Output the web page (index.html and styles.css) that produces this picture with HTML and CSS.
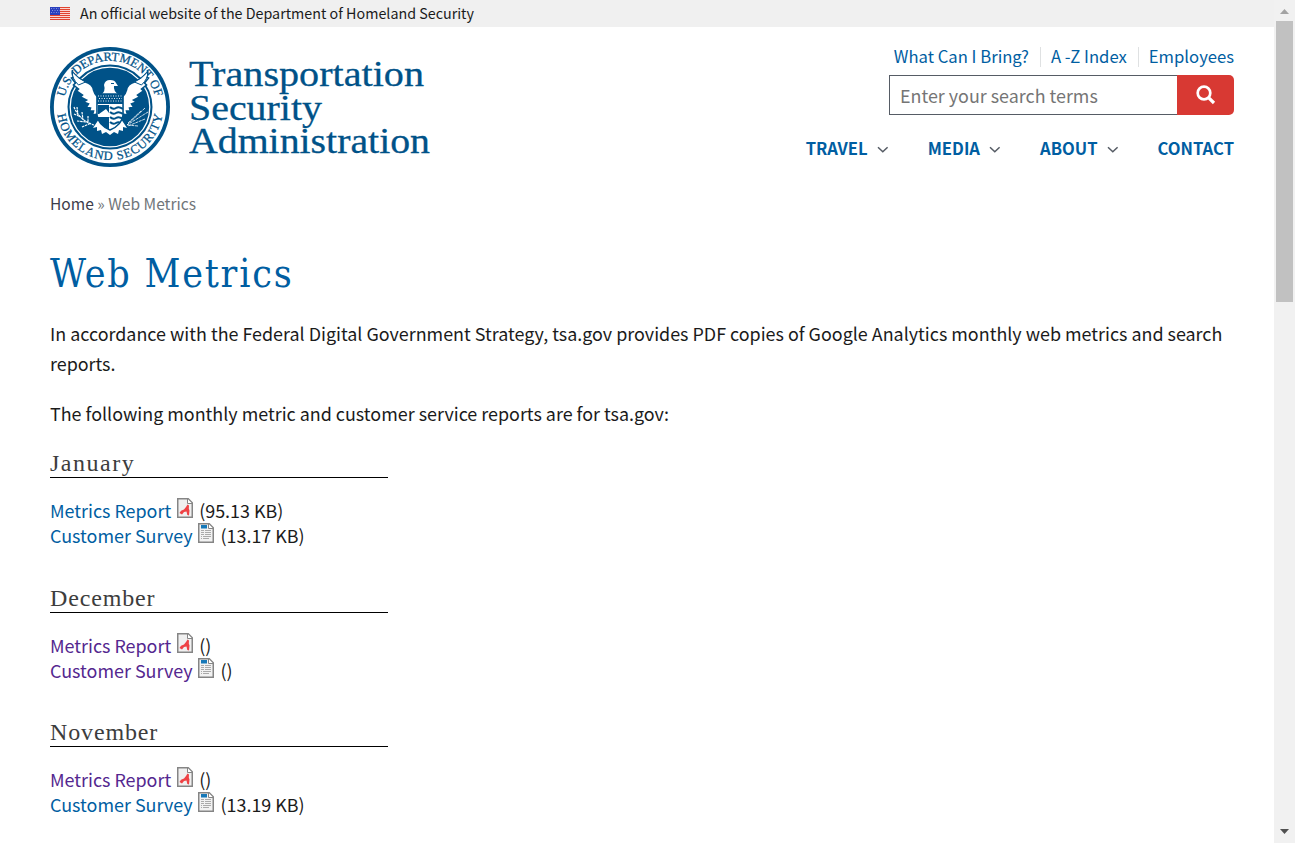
FILE: index.html
```
<!DOCTYPE html>
<html lang="en">
<head>
<meta charset="utf-8">
<title>Web Metrics | Transportation Security Administration</title>
<link rel="stylesheet" href="styles.css">
</head>
<body>
<svg class="sprites" width="0" height="0" aria-hidden="true">
  <symbol id="chevron" viewBox="0 0 12 8"><path d="M1 1.200 5.800 5.800 10.600 1.200" fill="none" stroke="#565c65" stroke-width="1.500"/></symbol>
  <symbol id="pdf" viewBox="0 0 16 20">
    <path d="M.75.75h10.500l4 4v14.500H.75z" fill="#f0f0f0" stroke="#858585" stroke-width="1.500"/>
    <path d="M10.500 1v4.500H15" fill="#fff" stroke="#858585"/>
    <path d="M2.500 15 4 12.800l3-1.300 2-2.500L10.500 6.500l1.500 1-.2 3 .7 2-.5 5-1.700-.5-.8-3.500-2.500.5-2 2.500z" fill="#ee4245"/>
  </symbol>
  <symbol id="doc" viewBox="0 0 16 20">
    <path d="M.75.75h10.500l4 4v14.500H.75z" fill="#f2f2f2" stroke="#858585" stroke-width="1.500"/>
    <path d="M10.500 1v4.500H15" fill="#fff" stroke="#858585"/>
    <path d="M3 2h6v3.500H3z" fill="#1678b8"/>
    <path d="M3 7.500h3M3 9.500h3M3 11.500h3M3 13.500h1M3 15.500h1M7 7.500h6M7 9.500h6M7 11.500h6M5 13.500h8M5 15.500h6" stroke="#aaa"/>
  </symbol>
</svg>
<div class="window">
  <div class="page">
    <div class="banner">
      <svg class="flag" viewBox="0 0 20 13"><path fill="#fbd5cf" d="M0 0h20v13H0z"/><path d="M0 .5h20M0 2.500h20M0 4.500h20M0 6.500h20M0 8.500h20M0 10.500h20M0 12.500h20" stroke="#e0442f"/><path fill="#2a3fbd" d="M0 0h10v8H0z"/><path d="M1 1.500h8M2 3.500h8M1 5.500h8" stroke="#7f8fe0" stroke-dasharray="1 1.500"/></svg>
      <span class="banner-text">An official website of the Department of Homeland Security</span>
    </div>
    <header class="header">
      <a class="brand">
        <svg class="seal" viewBox="0 0 120 120">
          <defs>
            <path id="arc-top" d="M14.600 51A46.300 46.300 0 0 1 105.400 51"/>
            <path id="arc-bottom" d="M7.300 66.500A53.100 53.100 0 0 0 112.700 66.500"/>
            <clipPath id="shield"><path d="M47 47h26v21q-1 10-13 15-12-5-13-15z"/></clipPath>
          </defs>
          <circle cx="60" cy="60" r="60" fill="#005288"/>
          <circle cx="60" cy="60" r="56.200" fill="#fff"/>
          <circle cx="60" cy="60" r="42.500" fill="#005288"/>
          <circle cx="60" cy="60" r="39.800" fill="none" stroke="#fff" stroke-width="1.300"/>
          <path id="wing" d="M22.500 25q6 7 13 10 7 2 8 8 1 4 4 7v17l-5 1 1-4-4 0 1-3-4-1 2-3-5-2 3-2-6-3 2-2-6-4 2-2-5-4 2-2-4-5 2-1q-2-3-1-7z" fill="#fff" stroke="#005288" stroke-width="1.600"/>
          <use href="#wing" transform="matrix(-1 0 0 1 120 0)"/>
          <g fill="#fff">
            <path d="M51 48q5-4 3-10 1-5 6-5 5 0 6 3l2 3-4 0q-1 5 5 9z"/>
            <path d="m49 72-6 9 4-1 0 4 4-1 1 4 4-2 4 3 4-3 4 2 1-4 4 1 0-4 4 1-6-9z"/>
          </g>
          <path d="M61 36.500h3" stroke="#005288"/>
          <path d="M47 47h26v21q-1 10-13 15-12-5-13-15z" fill="#fff" stroke="#005288" stroke-width="1.500"/>
          <g clip-path="url(#shield)">
            <path fill="#005288" d="M47 47h26v10H47z"/>
            <path d="M48 49h24M49 51.500h23M48 54h24" stroke="#fff" stroke-width=".9" stroke-dasharray="1 1.500"/>
            <path fill="#005288" d="M48 58h11v8l-3-4-7 5h-1zM48 70h11v14H48z"/>
            <path d="M60 60q3 3 6 1t7 1M60 65q3 3 6 1t7 1M60 70q3 3 6 1t7 1M60 75q3 3 6 1t7 1" fill="none" stroke="#005288" stroke-width="2"/>
          </g>
          <path d="M24 60q5 13 20 18M27 60l1 8M24 67l7 3M32 65l1 8M27 74l9 1M38 69l0 7M32 80l9-4" fill="none" stroke="#fff" stroke-width="1.200" stroke-dasharray="2.500 .7"/>
          <path d="M95 61 77 78M98 65 77 78M91 64 78 76M95 72 78 79M88 79 77 78" fill="none" stroke="#fff" stroke-width=".8" stroke-dasharray="3 .7"/>
          <g class="seal-text">
            <text><textPath href="#arc-top" startOffset="1" textLength="125">U.S. DEPARTMENT OF</textPath></text>
            <text><textPath href="#arc-bottom" startOffset="1" textLength="151">HOMELAND SECURITY</textPath></text>
          </g>
          <path d="M22.500 25q6 7 13 10l-7 3q-7-7-6-13zM97.500 25q-6 7-13 10l7 3q7-7 6-13z" fill="#fff" stroke="#005288"/>
        </svg>
        <svg class="wordmark" viewBox="0 0 245 115">
          <text x="0" y="39" textLength="235" lengthAdjust="spacingAndGlyphs">Transportation</text>
          <text x="0" y="72.500" textLength="133" lengthAdjust="spacingAndGlyphs">Security</text>
          <text x="0" y="106" textLength="241" lengthAdjust="spacingAndGlyphs">Administration</text>
        </svg>
      </a>
      <div class="header-tools">
        <nav class="quick-links"><a>What Can I Bring?</a><a>A -Z Index</a><a>Employees</a></nav>
        <div class="search">
          <div class="search-field">Enter your search terms</div>
          <div class="search-button"><svg viewBox="0 0 20 20"><circle cx="8" cy="8" r="6.300" fill="none" stroke="#fff" stroke-width="2.700"/><path d="m12.800 12.800 5.200 5.200" stroke="#fff" stroke-width="3.200"/></svg></div>
        </div>
        <nav class="main-nav">
          <a>TRAVEL<svg><use href="#chevron"/></svg></a>
          <a>MEDIA<svg><use href="#chevron"/></svg></a>
          <a>ABOUT<svg><use href="#chevron"/></svg></a>
          <a>CONTACT</a>
        </nav>
      </div>
    </header>
    <main class="content">
      <div class="breadcrumb"><a>Home</a> » Web Metrics</div>
      <h1>Web Metrics</h1>
      <p>In accordance with the Federal Digital Government Strategy, tsa.gov provides PDF copies of Google Analytics monthly web metrics and search<br>reports.</p>
      <p>The following monthly metric and customer service reports are for tsa.gov:</p>
      <section class="month">
        <h2 class="january">January</h2>
        <div class="file"><a>Metrics Report</a><svg><use href="#pdf"/></svg><span>(95.13 KB)</span></div>
        <div class="file"><a>Customer Survey</a><svg><use href="#doc"/></svg><span>(13.17 KB)</span></div>
      </section>
      <section class="month">
        <h2>December</h2>
        <div class="file"><a class="visited">Metrics Report</a><svg><use href="#pdf"/></svg><span>()</span></div>
        <div class="file"><a class="visited">Customer Survey</a><svg><use href="#doc"/></svg><span>()</span></div>
      </section>
      <section class="month">
        <h2>November</h2>
        <div class="file"><a class="visited">Metrics Report</a><svg><use href="#pdf"/></svg><span>()</span></div>
        <div class="file"><a>Customer Survey</a><svg><use href="#doc"/></svg><span>(13.19 KB)</span></div>
      </section>
    </main>
  </div>
  <div class="scrollbar">
    <svg class="arrow" viewBox="0 0 9 5"><path d="M0 5 4.500 0 9 5z" fill="#a3a3a3"/></svg>
    <div class="thumb"></div>
    <svg class="arrow arrow-down" viewBox="0 0 9 5"><path d="M0 0h9L4.500 5z" fill="#505050"/></svg>
  </div>
</div>
</body>
</html>
```
FILE: styles.css
```
* { box-sizing: border-box; }
body { margin: 0; overflow: hidden; background: #fff; color: #1b1b1b; font-family: "Noto Sans CJK SC", "Open Sans", sans-serif; }
.sprites { display: block; height: 0; }
.window { display: flex; height: 843px; }
.page { width: 1274px; overflow: hidden; white-space: nowrap; }
.banner { display: flex; align-items: center; gap: 10px; height: 27px; padding-left: 50px; background: #f0f0f0; font-size: 14.3px; line-height: 25px; }
.banner-text { height: 27px; }
.flag { width: 20px; height: 13px; }
.header { display: flex; justify-content: space-between; height: 148px; padding: 20px 40px 0 50px; }
.brand { display: flex; gap: 19px; }
.seal { width: 120px; height: 120px; }
.seal-text { fill: #005288; font: 12.5px "Liberation Serif", serif; stroke: #005288; stroke-width: .25px; }
.wordmark { width: 245px; height: 115px; fill: #005288; stroke: #005288; stroke-width: .3px; font: 36px "Liberation Serif", serif; }
.header-tools { display: flex; flex-direction: column; align-items: flex-end; width: 450px; }
.quick-links { display: flex; height: 28px; color: #005ea2; font-size: 16.67px; line-height: 18px; }
.quick-links a { height: 20px; }
.quick-links a + a { margin-left: 11px; padding-left: 10px; border-left: 1px solid #dfe1e2; }
.search { display: flex; width: 345px; height: 40px; }
.search-field { flex: 1; border: 1px solid #565c65; border-right: 0; padding-left: 10px; color: #757575; font-size: 17.9px; line-height: 38px; }
.search-button { display: flex; align-items: center; justify-content: center; width: 57px; border-radius: 0 5px 5px 0; background: #d83933; }
.search-button svg { width: 20px; height: 20px; }
.main-nav { display: flex; gap: 39px; margin-top: 21px; color: #005ea2; font-size: 16.6px; font-weight: 700; line-height: 24px; }
.main-nav a { display: flex; align-items: center; }
.main-nav svg { width: 12px; height: 8px; margin: 4px 0 0 9px; }
.content { padding-left: 50px; font-size: 17.91px; }
.breadcrumb { height: 58px; padding-top: 16px; color: #71767a; font-size: 15.55px; line-height: 24px; }
.breadcrumb a { color: #3d3d4b; }
h1 { margin: 12px 0 17px; color: #005ea2; font: 39px/57px "DejaVu Serif Condensed", "DejaVu Serif", serif; font-stretch: condensed; letter-spacing: 1.8px; height: 56px; }
p { margin: 0 0 20px; line-height: 30px; }
.month { height: 134.5px; }
.month:first-of-type { margin-top: 22px; }
h2 { width: 338px; height: 28px; margin: 0 0 20px; border-bottom: 1px solid #000; color: #3d3d3d; font: 24px/26px "Liberation Serif", serif; letter-spacing: .85px; }
.january { letter-spacing: 1.5px; }
.file { display: flex; height: 25px; line-height: 25px; }
.file a { color: #005ea2; }
.file a.visited { color: #54278f; }
.file svg { width: 16px; height: 20px; margin: 0 6px 0 6px; }
.scrollbar { display: flex; flex-direction: column; align-items: center; width: 21px; background: #f1f1f1; }
.arrow { width: 9px; height: 5px; margin: 9px 0 7px; }
.thumb { width: 17px; height: 281px; background: #c1c1c1; }
.arrow-down { margin: auto 0 9px; }
```
